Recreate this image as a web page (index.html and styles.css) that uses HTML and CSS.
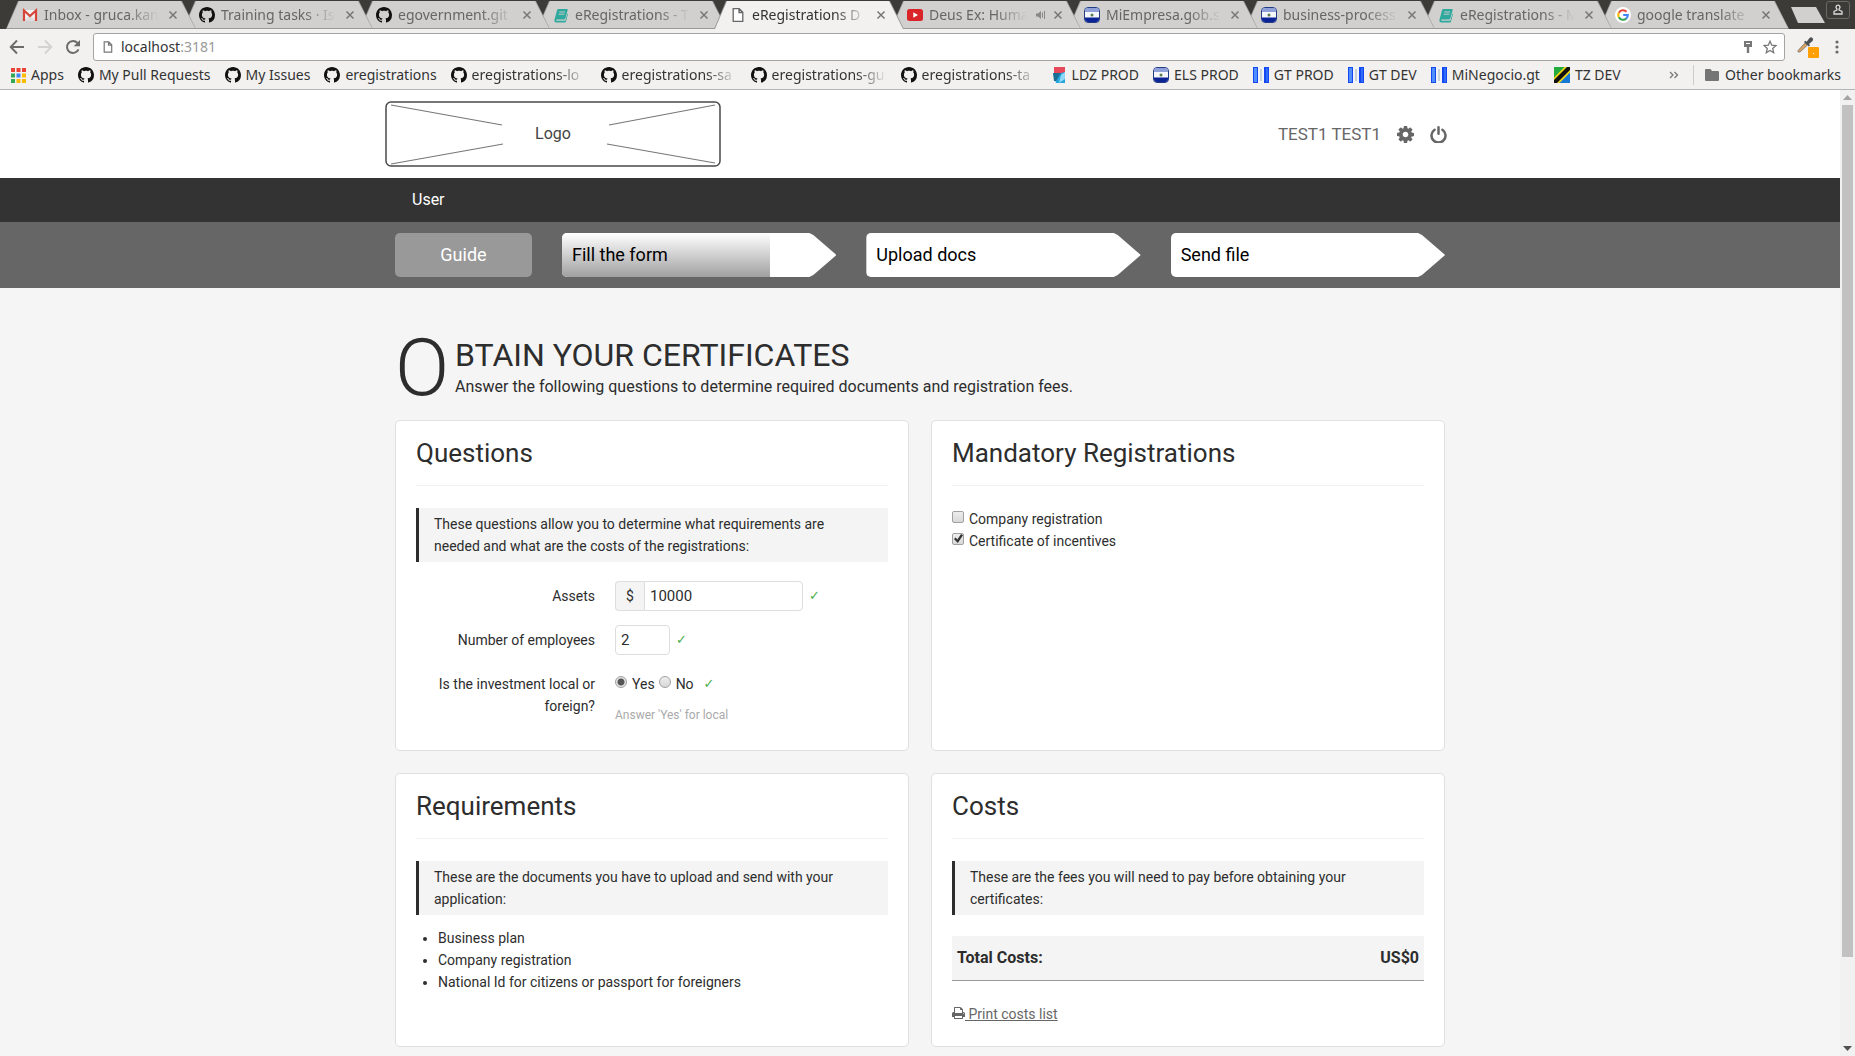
FILE: index.html
```html
<!DOCTYPE html>
<html lang="en">
<head>
<meta charset="utf-8">
<title>eRegistrations Demo</title>
<link rel="stylesheet" href="styles.css">
</head>
<body>
<svg class="sprite" aria-hidden="true">
  <symbol id="github" viewBox="0 0 16 16"><path fill="#111" d="M8 0C3.58 0 0 3.58 0 8c0 3.54 2.29 6.53 5.47 7.59.4.07.55-.17.55-.38 0-.19-.01-.82-.01-1.49-2.01.37-2.53-.49-2.69-.94-.09-.23-.48-.94-.82-1.13-.28-.15-.68-.52-.01-.53.63-.01 1.08.58 1.23.82.72 1.21 1.87.87 2.33.66.07-.52.28-.87.51-1.07-1.78-.2-3.64-.89-3.64-3.95 0-.87.31-1.59.82-2.15-.08-.2-.36-1.02.08-2.12 0 0 .67-.21 2.2.82.64-.18 1.32-.27 2-.27.68 0 1.36.09 2 .27 1.53-1.04 2.2-.82 2.2-.82.44 1.1.16 1.92.08 2.12.51.56.82 1.27.82 2.15 0 3.07-1.87 3.75-3.65 3.95.29.25.54.73.54 1.48 0 1.07-.01 1.93-.01 2.2 0 .21.15.46.55.38A8.013 8.013 0 0016 8c0-4.42-3.58-8-8-8z"/></symbol>
  <symbol id="gmail" viewBox="0 0 16 16"><path fill="#f2f2f2" d="M2 3h12v11H2z"/><path fill="#ddd" d="M2 14l6-6 6 6z"/><path fill="none" stroke="#d6453a" stroke-width="2.2" d="M2 14V3.500l6 5.500 6-5.500V14"/></symbol>
  <symbol id="book" viewBox="0 0 16 16"><path fill="#2fa89d" d="M5.500 2h8.500q1 0 .7 1l-2.400 8.500q-.3 1-1.300 1H3.500q-.8.700 0 1.300h8.800l2.200-7.300.5.600-2 7.400q-.3.900-1.300.9H3q-2-.2-1.600-2.400L4 3.200Q4.400 2 5.500 2z"/><path stroke="#d2d0ce" stroke-width=".9" d="M6.300 5h5.700M5.700 7.200h5.700"/></symbol>
  <symbol id="page" viewBox="0 0 16 16"><path fill="#fff" stroke="#666" stroke-width="1.300" d="M3.200 1.700h6l3.600 3.600v9H3.200zM9 1.700v3.800h3.800"/></symbol>
  <symbol id="youtube" viewBox="0 0 16 16"><rect y="2" width="16" height="12" rx="2.500" fill="#d9252a"/><path fill="#fff" d="M6.300 5.300v5.400L11 8z"/></symbol>
  <symbol id="salvador" viewBox="0 0 16 16"><rect x=".5" y=".5" width="15" height="15" rx="3.500" fill="#f4f6fb" stroke="#223c86"/><path fill="#8fa0d8" d="M1 5V4q0-3 3-3h8q3 0 3 3v1z"/><path fill="#0b2394" d="M1 10.500h14V12q0 3-3 3H4q-3 0-3-3z"/><circle cx="8" cy="8" r="1.500" fill="#587b4d"/></symbol>
  <symbol id="google" viewBox="0 0 16 16"><circle cx="8" cy="8" r="8" fill="#fff"/><g fill="none" stroke-width="2.100"><path stroke="#ea4335" d="M11.500 4.700A4.800 4.800 0 0 0 3.800 5.700"/><path stroke="#fbbc05" d="M3.800 5.700a4.800 4.800 0 0 0 0 4.600"/><path stroke="#34a853" d="M3.800 10.300a4.800 4.800 0 0 0 7.400 1.300"/><path stroke="#4285f4" d="M11.200 11.600A4.700 4.700 0 0 0 12.800 8H8.200"/></g></symbol>
  <symbol id="guatemala" viewBox="0 0 16 16"><path fill="#1447f2" d="M0 0h16v16H0z"/><path fill="#4f8ffb" d="M1 1h3v14H1z"/><path fill="#2f6cf8" d="M13 1h2v14h-2z"/><path fill="#f0f4f8" d="M5 0h6v16H5z"/><path fill="#c9d2da" d="M7 2h2v12H7z"/></symbol>
  <symbol id="tanzania" viewBox="0 0 16 16"><path fill="#1478d4" d="M0 0h16v16H0z"/><path fill="#23ac3d" d="M0 0h14L0 14z"/><path fill="#f2d31b" d="M0 16V10.500L10.500 0H16v5.500L5.500 16z"/><path fill="#111" d="M0 16v-3L13 0h3v3L3 16z"/></symbol>
  <symbol id="lesotho" viewBox="0 0 16 16"><path fill="#e8475a" d="M3 0h11v6H3z"/><path fill="#27a5dd" d="M2 6h8l4-1v11H5z"/><path fill="#1a6e94" d="M2 6h8l-5 8H3z"/><path fill="#8fd9f7" d="M10 8l4-3v7l-6 4z"/></symbol>
  <symbol id="cog" viewBox="0 0 1536 1536"><path fill="currentColor" fill-rule="evenodd" d="M1024 768q0 106-75 181t-181 75-181-75-75-181 75-181 181-75 181 75 75 181zm512-109v222q0 12-8 23t-20 13l-185 28q-19 54-39 91 35 50 107 138 10 12 10 25t-9 23q-27 37-99 108t-94 71q-12 0-26-9l-138-108q-44 23-91 38-16 136-29 186-7 28-36 28h-222q-14 0-24.500-8.500t-11.500-21.500l-28-184q-49-16-90-37l-141 107q-10 9-25 9-14 0-25-11-126-114-165-168-7-10-7-23 0-12 8-23 15-21 51-66.500t54-70.500q-27-50-41-99l-183-27q-13-2-21-12.500t-8-23.500v-222q0-12 8-23t19-13l186-28q14-46 39-92-40-57-107-138-10-12-10-24 0-10 9-23 26-36 98.500-107.500t94.500-71.500q13 0 26 10l138 107q44-23 91-38 16-136 29-186 7-28 36-28h222q14 0 24.500 8.500t11.500 21.500l28 184q49 16 90 37l142-107q9-9 24-9 13 0 25 10 129 119 165 170 7 8 7 22 0 12-8 23-15 21-51 66.500t-54 70.500q26 50 41 98l183 28q13 2 21 12.500t8 23.500z"/></symbol>
  <symbol id="power" viewBox="0 0 17 17"><path fill="none" stroke="currentColor" stroke-width="2.500" stroke-linecap="round" d="M4.600 3.700a7 7 0 1 0 7.800 0M8.500 1.300v6.500"/></symbol>
  <symbol id="print" viewBox="0 0 1664 1792"><path fill="currentColor" d="M384 1536h896v-256h-896v256zm0-640h896v-384h-160q-40 0-68-28t-28-68v-160h-640v640zm1152 64q0-26-19-45t-45-19-45 19-19 45 19 45 45 19 45-19 19-45zm128 0v416q0 13-9.500 22.500t-22.500 9.500h-224v160q0 40-28 68t-68 28h-960q-40 0-68-28t-28-68v-160h-224q-13 0-22.500-9.500t-9.500-22.500v-416q0-79 56.500-135.500t135.500-56.500h64v-544q0-40 28-68t68-28h672q40 0 88 20t76 48l152 152q28 28 48 76t20 88v256h64q79 0 135.500 56.500t56.500 135.500z"/></symbol>
  <symbol id="close" viewBox="0 0 10 10"><path stroke="#777" stroke-width="1.500" d="M1.500 1.500l7 7M8.500 1.500l-7 7"/></symbol>
</svg>

<header class="browser">
  <div class="tabstrip">
    <nav class="tabs" aria-label="Tabs">
      <div class="tab"><svg class="icon"><use href="#gmail"/></svg><span class="tab-title">Inbox - gruca.kan</span><button class="tab-close" aria-label="Close"><svg><use href="#close"/></svg></button></div>
      <div class="tab"><svg class="icon"><use href="#github"/></svg><span class="tab-title">Training tasks · Is</span><button class="tab-close" aria-label="Close"><svg><use href="#close"/></svg></button></div>
      <div class="tab"><svg class="icon"><use href="#github"/></svg><span class="tab-title">egovernment.git</span><button class="tab-close" aria-label="Close"><svg><use href="#close"/></svg></button></div>
      <div class="tab"><svg class="icon"><use href="#book"/></svg><span class="tab-title">eRegistrations - T</span><button class="tab-close" aria-label="Close"><svg><use href="#close"/></svg></button></div>
      <div class="tab active"><svg class="icon"><use href="#page"/></svg><span class="tab-title">eRegistrations D</span><button class="tab-close" aria-label="Close"><svg><use href="#close"/></svg></button></div>
      <div class="tab"><svg class="icon"><use href="#youtube"/></svg><span class="tab-title">Deus Ex: Huma</span><svg class="sound" viewBox="0 0 10 10"><path fill="#888" d="M0 3.500h2L5 1v8L2 6.500H0z"/><path fill="none" stroke="#888" d="M6.500 2.500v5M8.500 1v8"/></svg><button class="tab-close" aria-label="Close"><svg><use href="#close"/></svg></button></div>
      <div class="tab"><svg class="icon"><use href="#salvador"/></svg><span class="tab-title">MiEmpresa.gob.s</span><button class="tab-close" aria-label="Close"><svg><use href="#close"/></svg></button></div>
      <div class="tab"><svg class="icon"><use href="#salvador"/></svg><span class="tab-title">business-process</span><button class="tab-close" aria-label="Close"><svg><use href="#close"/></svg></button></div>
      <div class="tab"><svg class="icon"><use href="#book"/></svg><span class="tab-title">eRegistrations - M</span><button class="tab-close" aria-label="Close"><svg><use href="#close"/></svg></button></div>
      <div class="tab"><svg class="icon"><use href="#google"/></svg><span class="tab-title">google translate</span><button class="tab-close" aria-label="Close"><svg><use href="#close"/></svg></button></div>
    </nav>
    <button class="new-tab" aria-label="New tab"></button>
    <button class="profile" aria-label="Profile"><svg viewBox="0 0 12 12"><path fill="none" stroke="#ddd" stroke-width="1.300" d="M6 1.200a2 2 0 0 1 1.200 3.600L7 6l3 1.500V10H2V7.500L5 6l-.2-1.200A2 2 0 0 1 6 1.200z"/></svg></button>
  </div>
  <div class="toolbar">
    <button class="tool" aria-label="Back"><svg viewBox="0 0 16 16"><path fill="none" stroke="#6b6b6b" stroke-width="1.900" d="M15 8H2M8 1.500L1.700 8 8 14.500"/></svg></button>
    <button class="tool" aria-label="Forward"><svg viewBox="0 0 16 16"><path fill="none" stroke="#d4d3d2" stroke-width="1.900" d="M1 8h13M8 1.500L14.300 8 8 14.500"/></svg></button>
    <button class="tool" aria-label="Reload"><svg viewBox="0 0 16 16"><path fill="none" stroke="#6b6b6b" stroke-width="2" d="M13.500 10.300A6 6 0 1 1 12.500 4"/><path fill="#6b6b6b" d="M15 1v6.300H8.700z"/></svg></button>
    <div class="omnibox">
      <svg class="omni-page" viewBox="0 0 10 12"><path fill="none" stroke="#777" stroke-width="1.200" d="M1.200 .8h4.500l3 3v7.400H1.200zM5.500.8v3.300h3.200"/></svg>
      <a class="url" href="#">localhost<span>:3181</span></a>
      <svg class="omni-key" viewBox="0 0 10 14"><path fill="#777" d="M1 1h8v6H6.200v6H3.800V7H1z"/><path fill="#fff" d="M3 3h4v1H3z"/></svg>
      <svg class="omni-star" viewBox="0 0 14 14"><path fill="none" stroke="#777" stroke-width="1.300" d="M7 1.200l1.700 4 4.300.4-3.300 2.800 1 4.300L7 10.400l-3.700 2.300 1-4.300L1 5.600l4.300-.4z"/></svg>
    </div>
    <button class="picker" aria-label="Color picker"><svg viewBox="0 0 22 22"><path fill="#d9a25c" stroke="#777" stroke-width=".8" d="M1 14.500L8 7l2.300 2.300L3 16H1z"/><path fill="#4b5054" d="M7 6l1.200-1.200 1.500 1L12.500 2q1.700-1.300 3 0t0 3L12 8l1 1.300-1.200 1.200z"/><rect x="11" y="11" width="11" height="11" rx="1" fill="#ffa000"/><path fill="#fff" d="M16 17h1v1h-1z"/></svg></button>
    <button class="menu" aria-label="Menu"><svg viewBox="0 0 4 14"><g fill="#6b6b6b"><circle cx="2" cy="2" r="1.600"/><circle cx="2" cy="7" r="1.600"/><circle cx="2" cy="12" r="1.600"/></g></svg></button>
  </div>
  <nav class="bookmarks" aria-label="Bookmarks">
    <a class="bookmark" href="#"><svg class="icon" viewBox="0 0 16 16"><path fill="#ea4335" d="M1 1h4v4H1zM6.500 1h4v4h-4zM12 1h4v4h-4z"/><path fill="#34a853" d="M1 6.500h4v4H1zM1 12h4v4H1z"/><path fill="#4285f4" d="M6.500 6.500h4v4h-4z"/><path fill="#fbbc05" d="M12 6.500h4v4h-4zM6.500 12h4v4h-4zM12 12h4v4h-4z"/></svg><span>Apps</span></a>
    <a class="bookmark" href="#"><svg class="icon"><use href="#github"/></svg><span>My Pull Requests</span></a>
    <a class="bookmark" href="#"><svg class="icon"><use href="#github"/></svg><span>My Issues</span></a>
    <a class="bookmark" href="#"><svg class="icon"><use href="#github"/></svg><span>eregistrations</span></a>
    <a class="bookmark long" href="#"><svg class="icon"><use href="#github"/></svg><span>eregistrations-lo</span></a>
    <a class="bookmark long" href="#"><svg class="icon"><use href="#github"/></svg><span>eregistrations-sa</span></a>
    <a class="bookmark long" href="#"><svg class="icon"><use href="#github"/></svg><span>eregistrations-gu</span></a>
    <a class="bookmark long" href="#"><svg class="icon"><use href="#github"/></svg><span>eregistrations-ta</span></a>
    <a class="bookmark" href="#"><svg class="icon"><use href="#lesotho"/></svg><span>LDZ PROD</span></a>
    <a class="bookmark" href="#"><svg class="icon"><use href="#salvador"/></svg><span>ELS PROD</span></a>
    <a class="bookmark" href="#"><svg class="icon"><use href="#guatemala"/></svg><span>GT PROD</span></a>
    <a class="bookmark" href="#"><svg class="icon"><use href="#guatemala"/></svg><span>GT DEV</span></a>
    <a class="bookmark" href="#"><svg class="icon"><use href="#guatemala"/></svg><span>MiNegocio.gt</span></a>
    <a class="bookmark" href="#"><svg class="icon"><use href="#tanzania"/></svg><span>TZ DEV</span></a>
    <button class="more" aria-label="More bookmarks"><svg viewBox="0 0 10 8"><path fill="none" stroke="#777" stroke-width="1.300" d="M1 1l3 3-3 3M5.500 1l3 3-3 3"/></svg></button>
    <a class="bookmark other" href="#"><svg class="icon" viewBox="0 0 16 16"><path fill="#757575" d="M1 3q0-1 1-1h4.500L8 4h6q1 0 1 1v8q0 1-1 1H2q-1 0-1-1z"/></svg><span>Other bookmarks</span></a>
  </nav>
</header>

<div class="viewport">
  <div class="page">
    <header class="site-header">
      <div class="container site-top">
        <a class="logo" href="#">
          <svg viewBox="0 0 336 66" aria-hidden="true"><rect x="1" y="1" width="334" height="64" rx="5" fill="#fff" stroke="#4a4a4a" stroke-width="1.500"/><path stroke="#777" stroke-width="1.200" d="M6 4l111 20M330 4L224 24M6 63l112-20M330 62L222 43"/></svg>
          <span>Logo</span>
        </a>
        <div class="account">
          <a href="#">TEST1 TEST1</a>
          <a href="#" aria-label="Settings"><svg><use href="#cog"/></svg></a>
          <a href="#" aria-label="Log out"><svg><use href="#power"/></svg></a>
        </div>
      </div>
    </header>
    <nav class="role-nav"><div class="container"><a href="#">User</a></div></nav>
    <nav class="steps-nav">
      <div class="container steps">
        <a class="guide" href="#">Guide</a>
        <a class="step" href="#"><span class="progress" style="width:76%"></span><span class="step-label">Fill the form</span></a>
        <a class="step" href="#"><span class="step-label">Upload docs</span></a>
        <a class="step" href="#"><span class="step-label">Send file</span></a>
      </div>
    </nav>
    <main class="container main">
      <div class="intro">
        <span class="drop-cap">O</span>
        <h1>BTAIN YOUR CERTIFICATES</h1>
        <p>Answer the following questions to determine required documents and registration fees.</p>
      </div>
      <div class="cards">
        <section class="card">
          <h2>Questions</h2>
          <p class="notice">These questions allow you to determine what requirements are needed and what are the costs of the registrations:</p>
          <form class="form">
            <div class="field">
              <label for="assets">Assets</label>
              <div class="control"><div class="money"><span>$</span><input id="assets" type="text" value="10000"></div><span class="valid">✓</span></div>
            </div>
            <div class="field">
              <label for="employees">Number of employees</label>
              <div class="control"><input class="small" id="employees" type="text" value="2"><span class="valid">✓</span></div>
            </div>
            <div class="field" role="radiogroup" aria-labelledby="investment">
              <span class="field-label" id="investment">Is the investment local or foreign?</span>
              <div>
                <div class="radios"><label><input type="radio" name="local" checked>Yes</label><label><input type="radio" name="local">No</label><span class="valid">✓</span></div>
                <p class="hint">Answer 'Yes' for local</p>
              </div>
            </div>
          </form>
        </section>
        <section class="card">
          <h2>Mandatory Registrations</h2>
          <div class="checks">
            <label><input type="checkbox">Company registration</label>
            <label><input type="checkbox" checked>Certificate of incentives</label>
          </div>
        </section>
        <section class="card">
          <h2>Requirements</h2>
          <p class="notice">These are the documents you have to upload and send with your application:</p>
          <ul class="documents">
            <li>Business plan</li>
            <li>Company registration</li>
            <li>National Id for citizens or passport for foreigners</li>
          </ul>
        </section>
        <section class="card">
          <h2>Costs</h2>
          <p class="notice">These are the fees you will need to pay before obtaining your certificates:</p>
          <table class="costs"><tr><th scope="row">Total Costs:</th><td>US$0</td></tr></table>
          <a class="print" href="#"><svg><use href="#print"/></svg><span>&nbsp;Print costs list</span></a>
        </section>
      </div>
    </main>
  </div>
  <div class="scrollbar" aria-hidden="true">
    <svg viewBox="0 0 9 5"><path fill="#a3a3a3" d="M0 5l4.500-5L9 5z"/></svg>
    <div class="scroll-track"><div class="scroll-thumb" style="height:91%"></div></div>
    <svg viewBox="0 0 9 5"><path fill="#505050" d="M0 0l4.500 5L9 0z"/></svg>
  </div>
</div>
</body>
</html>
```

FILE: styles.css
```css
* { box-sizing: border-box; }

body {
  margin: 0;
  height: 100vh;
  display: flex;
  flex-direction: column;
  overflow: hidden;
  font: 14px/22px Roboto, "Liberation Sans", sans-serif;
  color: #2d2d2d;
  background: #f5f5f5;
}

h1, h2, p, ul { margin: 0; padding: 0; font-weight: 400; }
a { color: inherit; text-decoration: none; }
button { border: 0; padding: 0; background: none; font: inherit; }
svg { display: block; flex: none; }
.sprite { position: absolute; width: 0; height: 0; }
.icon { width: 16px; height: 16px; }

/* Browser window */
.browser {
  flex: none;
  font: 14px/20px "Noto Sans", "Open Sans", sans-serif;
  color: #333;
  background: #f2f1f0;
  border-bottom: 1px solid #b6b4b2;
}
.tabstrip {
  display: flex;
  height: 29px;
  padding: 1px 5px 0 6px;
  background: #3c3b37;
}
.tabs { display: flex; flex: 0 1 1783px; min-width: 0; }
.tab {
  position: relative;
  display: flex;
  align-items: center;
  flex: 0 1 190px;
  min-width: 0;
  margin-right: -13px;
  padding: 0 18px 0 16px;
  color: #666;
}
.tab::before, .tab::after {
  content: "";
  position: absolute;
  inset: 0;
  z-index: -1;
  background: #999;
  clip-path: polygon(0 100%, 12px 0, calc(100% - 14px) 0, 100% 100%);
}
.tab::after {
  background: #d2d0ce;
  clip-path: polygon(1px calc(100% - 1px), 13px 0, calc(100% - 15px) 0, calc(100% - 1px) calc(100% - 1px));
}
.tab:nth-child(1) { z-index: 10; }
.tab:nth-child(2) { z-index: 9; }
.tab:nth-child(3) { z-index: 8; }
.tab:nth-child(4) { z-index: 7; }
.tab:nth-child(6) { z-index: 5; }
.tab:nth-child(7) { z-index: 4; }
.tab:nth-child(8) { z-index: 3; }
.tab:nth-child(9) { z-index: 2; }
.tab:nth-child(10) { z-index: 1; }
.tab.active { z-index: 11; color: #333; }
.tab.active::after {
  background: #f2f1f0;
  clip-path: polygon(1px 100%, 13px 0, calc(100% - 15px) 0, calc(100% - 1px) 100%);
}
.tab-title {
  flex: 1;
  min-width: 0;
  margin: 0 9px 0 6px;
  overflow: hidden;
  white-space: nowrap;
  mask-image: linear-gradient(to right, #000 calc(100% - 32px), transparent);
}
.tab-close svg { width: 10px; height: 10px; }
.sound { width: 10px; height: 10px; margin-right: 7px; }
.new-tab {
  width: 34px;
  height: 16px;
  margin: 6px 0 0 2px;
  background: #d2d0ce;
  clip-path: polygon(0 0, 25px 0, 100% 100%, 7px 100%);
}
.profile {
  display: grid;
  place-items: center;
  width: 24px;
  height: 18px;
  margin-left: auto;
  border: 1px solid #6a6963;
  border-radius: 3px;
}
.profile svg { width: 12px; height: 12px; }
.toolbar {
  display: flex;
  align-items: center;
  gap: 12px;
  padding: 4px 16px 0 9px;
}
.tool svg { width: 16px; height: 16px; }
.omnibox {
  flex: 1;
  display: flex;
  align-items: center;
  height: 28px;
  padding: 0 7px 0 9px;
  background: #fff;
  border: 1px solid #a5a4a2;
  border-radius: 3px;
}
.omni-page { width: 10px; height: 12px; }
.url { flex: 1; margin-left: 8px; }
.url span { color: #999; }
.omni-key { width: 10px; height: 14px; margin-right: 10px; }
.omni-star { width: 14px; height: 14px; }
.picker svg { width: 22px; height: 22px; }
.menu { margin-left: 4px; }
.menu svg { width: 4px; height: 14px; }
.bookmarks {
  display: flex;
  align-items: center;
  gap: 14px;
  padding: 0 14px 0 10px;
  height: 28px;
  white-space: nowrap;
}
.bookmark { display: flex; align-items: center; gap: 5px; }
.long span {
  width: 115px;
  overflow: hidden;
  mask-image: linear-gradient(to right, #000 84px, transparent);
}
.more { margin-left: auto; }
.more svg { width: 10px; height: 8px; }
.other { padding-left: 10px; border-left: 1px solid #ccc; }

/* Page */
.viewport { flex: 1; min-height: 0; display: flex; }
.page { flex: 1; min-width: 0; overflow: hidden; }
.container { width: 100%; max-width: 1050px; margin: 0 auto; }
.site-header { background: #fff; }
.site-top {
  display: flex;
  align-items: center;
  justify-content: space-between;
  height: 88px;
}
.logo { display: grid; place-items: center; margin-left: -10px; }
.logo > * { grid-area: 1 / 1; }
.logo svg { width: 336px; height: 66px; }
.logo span { font-size: 16px; color: #444; }
.account {
  display: flex;
  align-items: center;
  gap: 16px;
  margin-right: -2px;
  font-size: 17px;
  color: #666;
}
.account svg { width: 17px; height: 17px; }
.role-nav { background: #333; color: #fff; font-size: 16px; line-height: 44px; }
.role-nav a { margin-left: 17px; }
.steps-nav { background: #666; padding: 11px 0; }
.steps { display: flex; gap: 30px; font-size: 18px; line-height: 44px; }
.guide {
  flex: 0 0 137px;
  text-align: center;
  color: #fff;
  background: #999;
  border-radius: 5px;
}
.step {
  flex: 1;
  position: relative;
  padding-left: 10px;
  color: #000;
  background: #fff;
  border-radius: 5px 0 0 5px;
  clip-path: polygon(0 0, calc(100% - 27px) 0, calc(100% - 23px) 2px, calc(100% - 1px) 21px, 100% 50%, calc(100% - 1px) 23px, calc(100% - 23px) 42px, calc(100% - 27px) 100%, 0 100%);
}
.progress {
  position: absolute;
  inset: 0 auto 0 0;
  border-radius: 5px 0 0 5px;
  background: linear-gradient(#fff, #a0a0a0);
}
.step-label { position: relative; }

.main { padding: 49px 0 40px; }
.intro { display: grid; grid-template-columns: 60px 1fr; margin-bottom: 19px; }
.drop-cap { grid-row: 1 / 3; font-size: 80px; font-weight: 300; line-height: 62px; }
.intro h1 { font-size: 32px; line-height: 36px; }
.intro p { font-size: 16px; line-height: 28px; }
.cards { display: grid; grid-template-columns: 1fr 1fr; gap: 22px; }
.card {
  padding: 0 20px 21px;
  background: #fff;
  border: 1px solid #e0e0e0;
  border-radius: 5px;
}
.card h2 {
  padding: 16px 0;
  margin-bottom: 22px;
  font-size: 26px;
  line-height: 32px;
  border-bottom: 1px solid #f1f1f1;
}
.notice { padding: 5px 15px; border-left: 3px solid #2d2d2d; background: #f4f4f4; }
.form { display: grid; gap: 14px; margin: 19px 0 3px; }
.field { display: grid; grid-template-columns: 179px 1fr; column-gap: 20px; }
.field > label, .field-label { padding-top: 4px; text-align: right; }
.control { display: flex; align-items: center; gap: 6px; }
.control input {
  height: 30px;
  padding: 0 5px;
  font: 15px/22px Roboto, sans-serif;
  color: inherit;
  background: #fff;
  border: 1px solid #ddd;
  border-radius: 4px;
  outline: 0;
}
.money { display: flex; width: 188px; }
.money span {
  flex: 0 0 29px;
  line-height: 28px;
  text-align: center;
  background: #f4f4f4;
  border: 1px solid #ddd;
  border-right: 0;
  border-radius: 4px 0 0 4px;
}
.money input { flex: 1; min-width: 0; border-radius: 0 4px 4px 0; }
.control .small { width: 55px; }
.valid { font: 700 13px/22px "DejaVu Sans", sans-serif; color: #4cae4c; }
.radios { display: flex; gap: 4px; padding-top: 4px; }
.radios .valid { margin-left: 6px; }
.radios label, .checks label { display: flex; align-items: flex-start; gap: 5px; }
input[type="radio"], input[type="checkbox"] {
  appearance: none;
  width: 12px;
  height: 12px;
  margin: 3px 0 0;
  border: 1px solid #a0a0a0;
  border-radius: 2px;
  background: linear-gradient(#eee, #d8d8d8);
}
input[type="radio"] { border-radius: 50%; }
input[type="radio"]:checked { background: radial-gradient(circle, #555 0 3px, #e4e4e4 4px); }
input[type="checkbox"]:checked::after {
  content: "";
  display: block;
  width: 9px;
  height: 9px;
  margin: 0 0 0 1px;
  background: #333;
  clip-path: polygon(0 55%, 18% 40%, 38% 60%, 78% 0, 100% 14%, 42% 100%);
}
.hint { margin-top: 9px; font-size: 12px; color: #aaa; }
.documents { margin: 12px 0 0 22px; }
.costs { width: 100%; margin: 21px 0 22px; border-collapse: collapse; font-size: 16px; background: #f4f4f4; }
.costs th, .costs td { height: 44px; padding: 0 5px; font-weight: 700; text-align: left; border-bottom: 1px solid #999; }
.costs td { text-align: right; }
.print { display: inline-flex; align-items: flex-start; color: #666; vertical-align: top; }
.print svg { width: 13px; height: 14px; margin-top: 3px; }
.print span { text-decoration: underline; }

/* Scroll bar of the viewport */
.scrollbar {
  flex: none;
  display: flex;
  flex-direction: column;
  align-items: center;
  gap: 5px;
  width: 15px;
  padding: 5px 2px;
  background: #f1f1f1;
}
.scrollbar svg { width: 9px; height: 5px; }
.scroll-track { flex: 1; width: 100%; }
.scroll-thumb { background: #c1c1c1; }
```
